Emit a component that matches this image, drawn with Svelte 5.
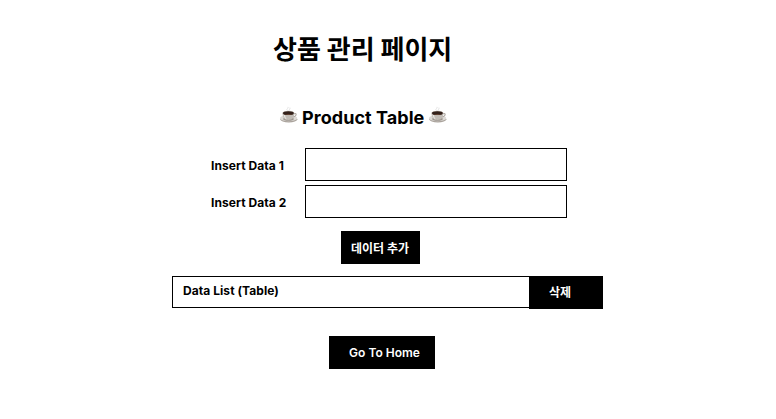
<script>
  const fields = ['Insert Data 1', 'Insert Data 2'];
  let values = $state(['', '']);
</script>

{#snippet coffee()}
  <svg class="cup" viewBox="0 0 20 20" aria-hidden="true">
    <ellipse cx="9.8" cy="13.300" rx="8.500" ry="3.100" fill="#aaa39c" />
    <ellipse cx="9.600" cy="12.200" rx="8.700" ry="3" fill="#dedbd7" />
    <ellipse cx="9.500" cy="13" rx="5.300" ry="1.800" fill="#9b948d" />
    <path d="M14.500 7.900c2.200-.8 3 0 2.500 1.300-.4 1.200-1.800 1.800-3.500 2" fill="none" stroke="#aaa39c" stroke-width="1.1" />
    <path d="M3.500 7c0 4.200 1.700 7 5.900 7s5.900-2.800 5.900-7z" fill="#c1bcb6" />
    <path d="M4.400 8.500c.6 3 1.800 4.500 3.500 4.900C6.700 12 6.200 10.500 6 8.500z" fill="#e8e5e2" />
    <ellipse cx="9.400" cy="7" rx="6" ry="2.200" fill="#b9b0a7" />
    <ellipse cx="9.400" cy="7.200" rx="5.400" ry="1.900" fill="#33211b" />
    <path d="M5.500 8q4 1.900 8 0q-4 .6-8 0" fill="#79513c" />
    <path d="M8.500 4.500c-2-1.600 1.500-1.800.3-3.600M10.800 4.500c-1-1.200.8-1.800.1-2.900" fill="none" stroke="#dcdcdc" stroke-width=".8" />
  </svg>
{/snippet}

<main>
  <h1>상품 관리 페이지</h1>
  <h2>{@render coffee()}<span>Product Table</span>{@render coffee()}</h2>
  <form onsubmit={(event) => event.preventDefault()}>
    {#each fields as label, i}
      <label><span>{label}</span><input bind:value={values[i]} /></label>
    {/each}
    <button class="add">데이터 추가</button>
  </form>
  <section>
    <div class="list">Data List (Table)</div>
    <button class="delete">삭제</button>
  </section>
  <button class="home">Go To Home</button>
</main>

<style>
  :global(body) {
    background: #fff;
  }
  main {
    box-sizing: border-box;
    width: 776px;
    height: 419px;
    padding-top: 29px;
    overflow: hidden;
    display: flex;
    flex-direction: column;
    align-items: flex-start;
    color: #000;
    font: 700 12px/16px Inter, 'Noto Sans CJK KR', sans-serif;
  }
  h1 {
    margin: 0 0 0 273px;
    font: 700 26px/38px 'Noto Sans CJK KR', sans-serif;
    white-space: nowrap;
  }
  h2 {
    display: flex;
    align-items: flex-start;
    height: 24px;
    margin: 38px 0 0 279px;
    font-size: 18px;
    line-height: 24px;
    font-weight: 700;
    white-space: nowrap;
  }
  h2 span {
    width: 123px;
    margin: 1px 3px 0 3px;
    letter-spacing: 0.05px;
  }
  .cup {
    width: 20px;
    height: 20px;
    margin-top: 1px;
  }
  form {
    display: flex;
    flex-direction: column;
    gap: 4px;
    margin: 19px 0 0 211px;
  }
  label {
    display: flex;
    align-items: center;
  }
  label span {
    width: 94px;
    padding-top: 2px;
    letter-spacing: 0.06px;
  }
  input {
    box-sizing: border-box;
    width: 262px;
    height: 33px;
    padding: 0 10px;
    border: 1px solid #000;
    border-radius: 0;
    background: #fff;
    font: inherit;
    outline: 0;
  }
  button {
    box-sizing: border-box;
    height: 33px;
    padding: 0;
    border: 0;
    background: #000;
    color: #fff;
    font: inherit;
    white-space: nowrap;
  }
  .add {
    width: 79px;
    margin: 9px 0 0 130px;
    padding: 2px 1px 0 0;
  }
  section {
    display: flex;
    margin: 12px 0 0 172px;
  }
  .list {
    box-sizing: border-box;
    width: 357px;
    height: 32px;
    padding: 6px 10px;
    border: 1px solid #000;
    border-right: 0;
    letter-spacing: 0.06px;
  }
  .delete {
    width: 74px;
    padding: 0 12px 0 0;
  }
  .home {
    width: 106px;
    margin: 27px 0 0 329px;
    padding-left: 5px;
    font-weight: 600;
  }
</style>
